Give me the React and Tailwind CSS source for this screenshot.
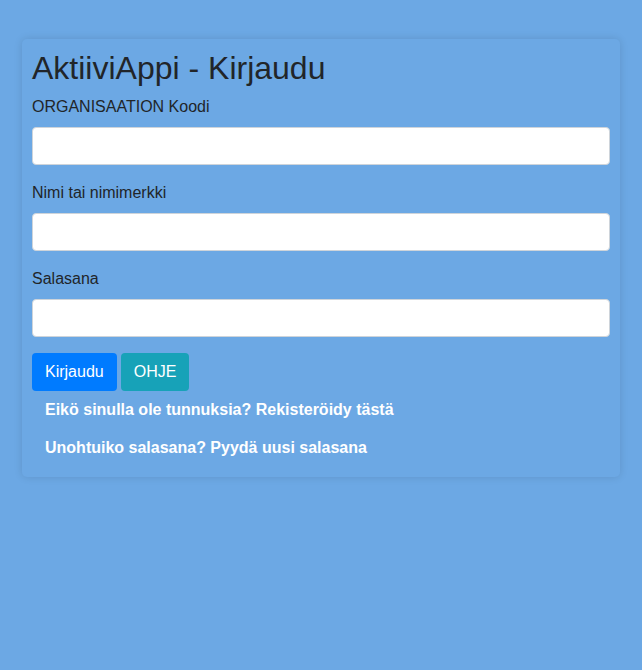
export default function App() {
  const inputCls = "block w-full h-[38px] bg-white border border-[#ced4da] rounded-[4px] px-3 text-base text-[#495057] focus:outline-none";
  const labelCls = "block mb-2 text-base leading-6 text-[#212529]";

  return (
    <div className="min-h-[670px] bg-[#6ca8e4] pt-[39px] px-[22px] font-['Liberation_Sans',Arial,sans-serif]">
      <div className="w-[598px] rounded-[5px] bg-[#6ca8e4] p-[10px] shadow-[0_0_8px_rgba(0,0,0,0.12)]">
        <h2 className="text-[32px] leading-[38.4px] font-normal text-[#212529] mb-2">AktiiviAppi - Kirjaudu</h2>
        <form onSubmit={e => e.preventDefault()}>
          <div className="mb-4">
            <label className={labelCls}>ORGANISAATION Koodi</label>
            <input type="text" className={inputCls} />
          </div>
          <div className="mb-4">
            <label className={labelCls}>Nimi tai nimimerkki</label>
            <input type="text" className={inputCls} />
          </div>
          <div className="mb-4">
            <label className={labelCls}>Salasana</label>
            <input type="password" className={inputCls} />
          </div>
          <div className="flex gap-1">
            <button type="submit" className="h-[38px] px-[13px] rounded-[4px] bg-[#007bff] text-white text-base">Kirjaudu</button>
            <button type="button" className="h-[38px] px-[13px] rounded-[4px] bg-[#17a2b8] text-white text-base">OHJE</button>
          </div>
        </form>
        <div className="flex flex-col">
          <a href="#" className="block px-[13px] py-[7px] leading-6 text-base font-bold text-white">Eikö sinulla ole tunnuksia? Rekisteröidy tästä</a>
          <a href="#" className="block px-[13px] py-[7px] leading-6 text-base font-bold text-white">Unohtuiko salasana? Pyydä uusi salasana</a>
        </div>
      </div>
    </div>
  );
}
